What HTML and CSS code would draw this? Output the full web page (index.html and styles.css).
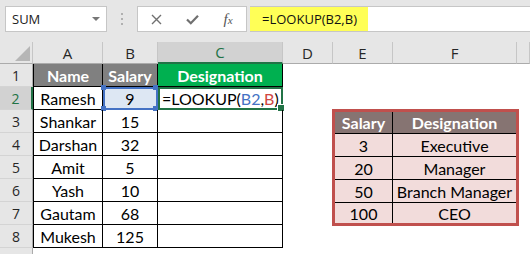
FILE: index.html
```html
<!DOCTYPE html>
<html lang="en">
<head>
    <meta charset="UTF-8">
    <title>LOOKUP</title>
    <link rel="stylesheet" href="styles.css">
</head>
<body>

<div class="toolbar">
    <div class="name-box">SUM<span class="arrow"></span></div>
    <div class="grip"><i></i><i></i><i></i></div>
    <div class="fx-buttons">
        <svg width="11" height="11" viewBox="0 0 11 11"><path d="M1 1 L10 10 M10 1 L1 10" stroke="#707070" stroke-width="1.4" fill="none"/></svg>
        <svg width="13" height="11" viewBox="0 0 13 11"><path d="M1 5.5 L4.8 9.3 L12 1.8" stroke="#707070" stroke-width="2.2" fill="none"/></svg>
        <span class="fx"><i>f</i><i class="x">x</i></span>
    </div>
    <div class="formula-input"><span class="formula-hl">=LOOKUP(B2,B)</span></div>
</div>

<div class="sheet">
    <!-- column headers -->
    <div class="corner"><span class="tri"></span></div>
    <div class="col-head">A</div>
    <div class="col-head">B</div>
    <div class="col-head active">C</div>
    <div class="col-head">D</div>
    <div class="col-head">E</div>
    <div class="col-head">F</div>
    <div class="col-head"></div>

    <!-- lookup table E3:F7 -->
    <div class="lookup">
        <div class="lk head sep">Salary</div>
        <div class="lk head">Designation</div>
        <div class="lk sep">3</div>
        <div class="lk">Executive</div>
        <div class="lk sep">20</div>
        <div class="lk">Manager</div>
        <div class="lk sep">50</div>
        <div class="lk">Branch Manager</div>
        <div class="lk sep last">100</div>
        <div class="lk last">CEO</div>
    </div>

    <!-- row 1 -->
    <div class="row-head">1</div>
    <div class="cell t first hd">Name</div>
    <div class="cell t hd">Salary</div>
    <div class="cell t hd green">Designation</div>
    <div class="cell"></div><div class="cell"></div><div class="cell"></div><div class="cell"></div>

    <!-- row 2 -->
    <div class="row-head active">2</div>
    <div class="cell t first">Ramesh</div>
    <div class="cell t ref">9<span class="h tl"></span><span class="h tr"></span><span class="h bl"></span><span class="h br"></span></div>
    <div class="cell t edit">=LOOKUP(<span class="blue">B2</span>,<span class="red">B</span>)<span class="caret"></span></div>
    <div class="cell"></div><div class="cell"></div><div class="cell"></div><div class="cell"></div>

    <!-- rows 3-7 (E:F taken by lookup table) -->
    <div class="row-head">3</div>
    <div class="cell t first">Shankar</div>
    <div class="cell t">15</div>
    <div class="cell t"></div>
    <div class="cell"></div><div class="cell"></div>

    <div class="row-head">4</div>
    <div class="cell t first">Darshan</div>
    <div class="cell t">32</div>
    <div class="cell t"></div>
    <div class="cell"></div><div class="cell"></div>

    <div class="row-head">5</div>
    <div class="cell t first">Amit</div>
    <div class="cell t">5</div>
    <div class="cell t"></div>
    <div class="cell"></div><div class="cell"></div>

    <div class="row-head">6</div>
    <div class="cell t first">Yash</div>
    <div class="cell t">10</div>
    <div class="cell t"></div>
    <div class="cell"></div><div class="cell"></div>

    <div class="row-head">7</div>
    <div class="cell t first">Gautam</div>
    <div class="cell t">68</div>
    <div class="cell t"></div>
    <div class="cell"></div><div class="cell"></div>

    <!-- row 8 -->
    <div class="row-head">8</div>
    <div class="cell t first">Mukesh</div>
    <div class="cell t">125</div>
    <div class="cell t"></div>
    <div class="cell"></div><div class="cell"></div><div class="cell"></div><div class="cell"></div>

    <!-- row 9, only its top edge shows -->
    <div class="row-head"></div>
    <div class="cell"></div><div class="cell"></div><div class="cell"></div>
    <div class="cell"></div><div class="cell"></div><div class="cell"></div><div class="cell"></div>
</div>

</body>
</html>
```

FILE: styles.css
```css
* {
    box-sizing: border-box;
}

body {
    margin: 0;
    background: #fff;
    font-family: "Lato", sans-serif;
    overflow: hidden;
}

/* formula bar */

.toolbar {
    display: flex;
    align-items: flex-start;
    height: 42px;
    padding: 6px 0 0 5px;
    background: #e6e6e6;
    font-family: "Open Sans", sans-serif;
}

.name-box {
    display: flex;
    align-items: center;
    justify-content: space-between;
    width: 102px;
    height: 26px;
    padding: 0 6px 0 6px;
    background: #fff;
    border: 1px solid #c6c6c6;
    font-size: 13px;
    color: #222;
}

.arrow {
    width: 0;
    height: 0;
    border-left: 4px solid transparent;
    border-right: 4px solid transparent;
    border-top: 4px solid #777;
}

.grip {
    display: flex;
    flex-direction: column;
    align-items: center;
    gap: 3px;
    width: 30px;
    padding-top: 7px;
}

.grip i {
    width: 2px;
    height: 2px;
    background: #b0b0b0;
}

.fx-buttons {
    display: grid;
    grid-template-columns: repeat(3, 1fr);
    place-items: center;
    width: 110px;
    height: 26px;
    background: #fff;
    border: 1px solid #c6c6c6;
}

.fx {
    font-family: "Liberation Serif", serif;
    font-size: 15px;
    color: #555;
}

.fx .x {
    font-size: 11px;
}

.formula-input {
    flex: 1;
    height: 26px;
    margin-left: 3px;
    background: #fff;
    border-top: 1px solid #c6c6c6;
    border-bottom: 1px solid #c6c6c6;
}

.formula-hl {
    display: inline-flex;
    align-items: center;
    height: 24px;
    padding: 0 11px 0 12px;
    background: #ffff57;
    font-size: 13px;
    color: #111;
}

/* grid */

.sheet {
    display: grid;
    grid-template-columns: 33px 70px 55px 125px 50px 60px 124px 1fr;
    grid-template-rows: 22px repeat(9, 23px);
}

.corner {
    position: relative;
    background: #e6e6e6;
    border-right: 1px solid #c6c6c6;
    border-bottom: 1px solid #ababab;
}

.corner .tri {
    position: absolute;
    right: 2px;
    bottom: 2px;
    width: 0;
    height: 0;
    border-left: 15px solid transparent;
    border-bottom: 15px solid #b6b6b6;
}

.col-head {
    display: flex;
    align-items: center;
    justify-content: center;
    background: #e6e6e6;
    border-right: 1px solid #c6c6c6;
    border-bottom: 1px solid #ababab;
    font-family: "Open Sans", sans-serif;
    font-size: 15px;
    color: #262626;
}

.col-head.active {
    background: #d2d2d2;
    border-bottom: 2px solid #217346;
    color: #217346;
}

.row-head {
    display: flex;
    align-items: center;
    justify-content: center;
    background: #e6e6e6;
    border-right: 1px solid #ababab;
    border-bottom: 1px solid #d4d4d4;
    font-family: "Open Sans", sans-serif;
    font-size: 14px;
    color: #262626;
}

.row-head.active {
    background: #d2d2d2;
    border-right: 2px solid #217346;
    color: #217346;
}

.cell {
    position: relative;
    display: flex;
    align-items: center;
    justify-content: center;
    font-size: 16px;
    color: #000;
    white-space: nowrap;
}

.cell.t {
    border-right: 1px solid #000;
    border-bottom: 1px solid #000;
}

.cell.first {
    border-left: 1px solid #000;
}

.cell.hd {
    background: #808080;
    color: #fff;
    font-weight: bold;
}

.cell.hd.green {
    background: #00b050;
}

.cell.ref {
    background: #dde7f3;
    outline: 2px solid #4472c4;
    outline-offset: -2px;
}

.ref .h {
    position: absolute;
    width: 5px;
    height: 5px;
    background: #4472c4;
}

.ref .tl { left: -2px; top: -2px; }
.ref .tr { right: -1px; top: -2px; }
.ref .bl { left: -2px; bottom: -2px; }
.ref .br { right: -1px; bottom: -2px; }

.cell.edit {
    justify-content: flex-start;
    padding-left: 4px;
    outline: 2px solid #217346;
    outline-offset: -2px;
}

.cell.edit::after {
    content: "";
    position: absolute;
    right: -3px;
    bottom: -3px;
    width: 6px;
    height: 6px;
    background: #217346;
    border: 1px solid #fff;
}

.blue {
    color: #4472c4;
}

.red {
    color: #d0453f;
}

.caret {
    display: inline-block;
    width: 1px;
    height: 17px;
    margin-left: 2px;
    background: #000;
}

/* lookup table */

.lookup {
    grid-column: 6 / 8;
    grid-row: 4 / 9;
    margin: -1px -2px -1px -1px;
    display: grid;
    grid-template-columns: 58px 1fr;
    grid-template-rows: 22px 23px 23px 23px 1fr;
    background: #f2dcdb;
    border: 3px solid #c0504d;
}

.lk {
    display: flex;
    align-items: center;
    justify-content: center;
    font-size: 16px;
    color: #000;
    border-bottom: 1px solid #000;
    white-space: nowrap;
}

.lk.sep {
    border-right: 1px solid #000;
}

.lk.last {
    border-bottom: 0;
}

.lk.head {
    background: #867472;
    color: #fff;
    font-weight: bold;
}
```
